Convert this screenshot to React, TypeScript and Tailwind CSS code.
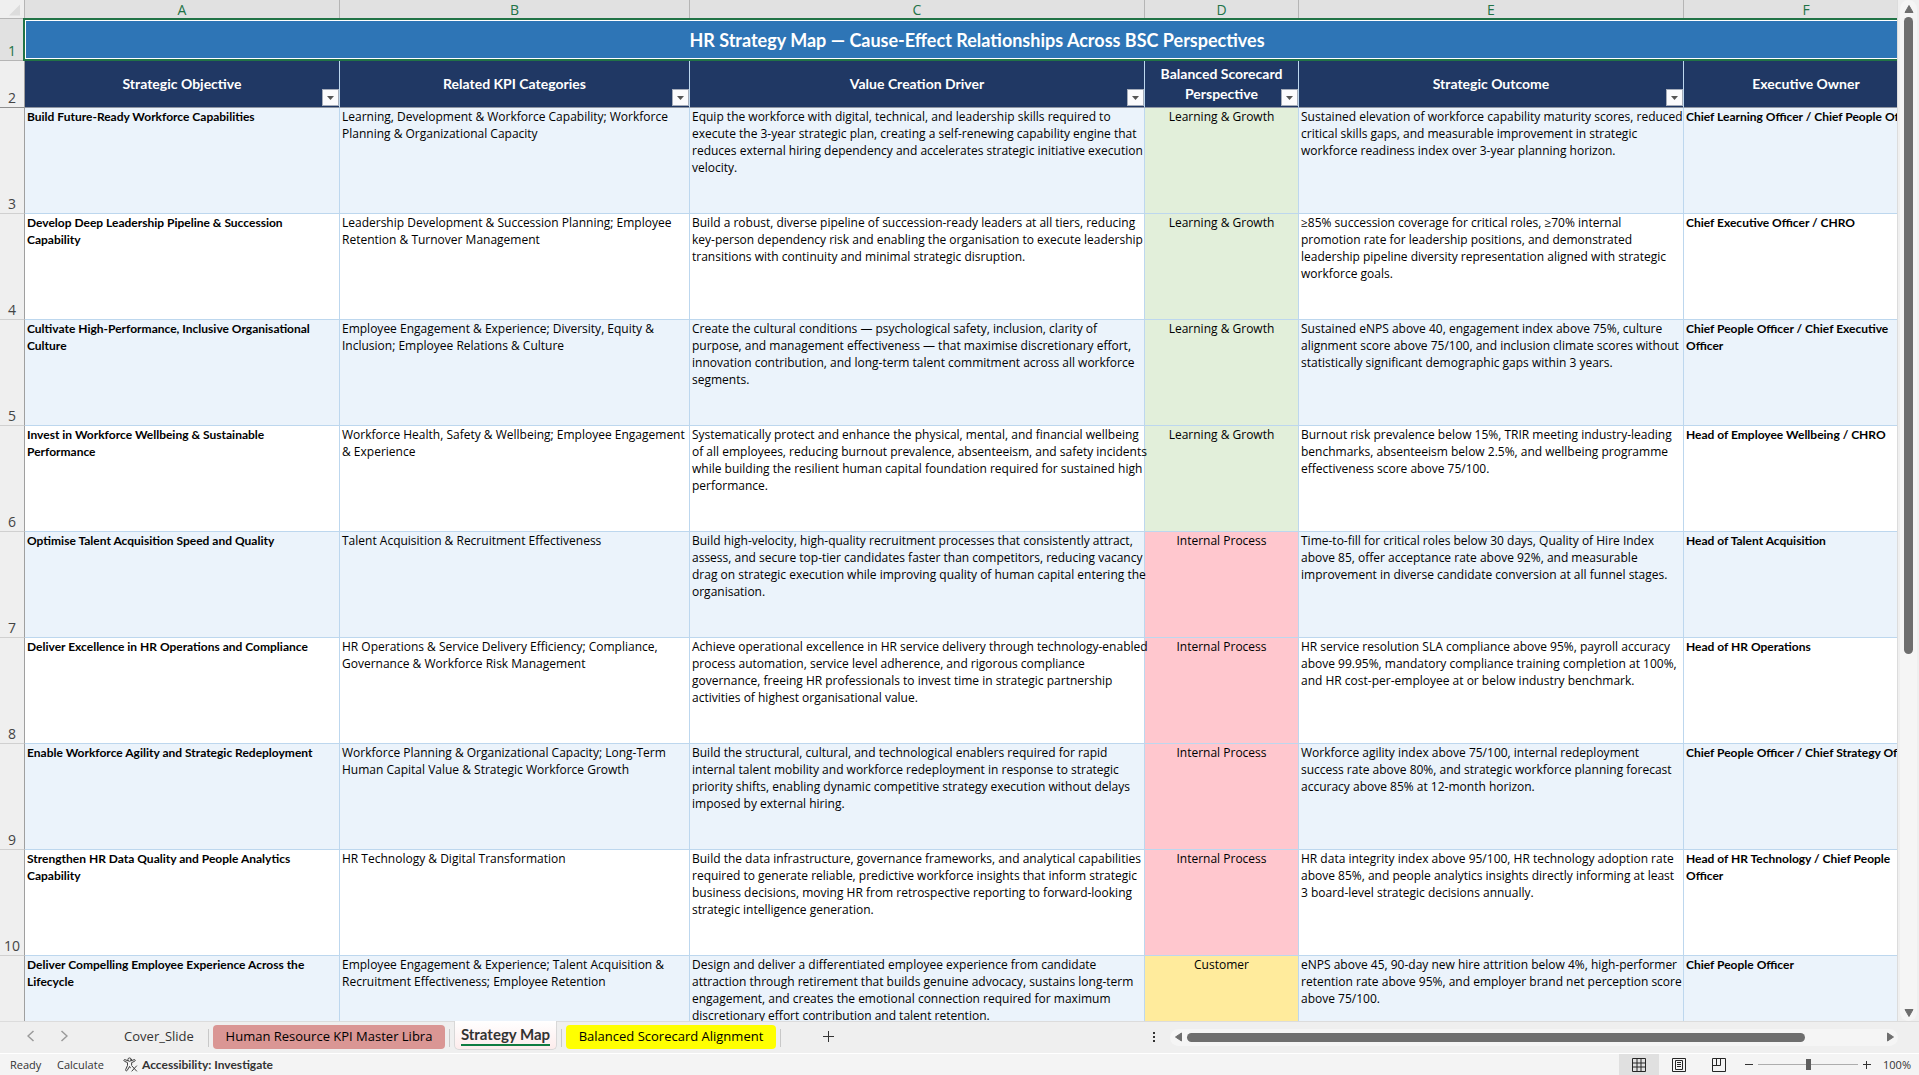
import clsx from "clsx";

type Tone = "growth" | "process" | "customer";

type Row = {
  n?: number;
  objective: string;
  kpis: string;
  driver: string;
  tone: Tone;
  outcome: string;
  owner: string;
};

const tones: Record<Tone, { label: string; className: string }> = {
  growth: { label: "Learning & Growth", className: "bg-[#e2efda]" },
  process: { label: "Internal Process", className: "bg-[#ffc7ce]" },
  customer: { label: "Customer", className: "bg-[#ffeb9c]" },
};

const columns = [
  { letter: "A", title: "Strategic Objective", width: "w-[315px]", filter: true },
  { letter: "B", title: "Related KPI Categories", width: "w-[350px]", filter: true },
  { letter: "C", title: "Value Creation Driver", width: "w-[455px]", filter: true },
  { letter: "D", title: "Balanced Scorecard\nPerspective", width: "w-[154px]", filter: true },
  { letter: "E", title: "Strategic Outcome", width: "w-[385px]", filter: true },
  { letter: "F", title: "Executive Owner", width: "w-[245px]", filter: false },
];

const rows: Row[] = [
  {
    n: 3,
    objective: "Build Future-Ready Workforce Capabilities",
    kpis: "Learning, Development & Workforce Capability; Workforce\nPlanning & Organizational Capacity",
    driver:
      "Equip the workforce with digital, technical, and leadership skills required to\nexecute the 3-year strategic plan, creating a self-renewing capability engine that\nreduces external hiring dependency and accelerates strategic initiative execution\nvelocity.",
    tone: "growth",
    outcome:
      "Sustained elevation of workforce capability maturity scores, reduced\ncritical skills gaps, and measurable improvement in strategic\nworkforce readiness index over 3-year planning horizon.",
    owner: "Chief Learning Officer / Chief People Officer",
  },
  {
    n: 4,
    objective: "Develop Deep Leadership Pipeline & Succession\nCapability",
    kpis: "Leadership Development & Succession Planning; Employee\nRetention & Turnover Management",
    driver:
      "Build a robust, diverse pipeline of succession-ready leaders at all tiers, reducing\nkey-person dependency risk and enabling the organisation to execute leadership\ntransitions with continuity and minimal strategic disruption.",
    tone: "growth",
    outcome:
      "≥85% succession coverage for critical roles, ≥70% internal\npromotion rate for leadership positions, and demonstrated\nleadership pipeline diversity representation aligned with strategic\nworkforce goals.",
    owner: "Chief Executive Officer / CHRO",
  },
  {
    n: 5,
    objective: "Cultivate High-Performance, Inclusive Organisational\nCulture",
    kpis: "Employee Engagement & Experience; Diversity, Equity &\nInclusion; Employee Relations & Culture",
    driver:
      "Create the cultural conditions — psychological safety, inclusion, clarity of\npurpose, and management effectiveness — that maximise discretionary effort,\ninnovation contribution, and long-term talent commitment across all workforce\nsegments.",
    tone: "growth",
    outcome:
      "Sustained eNPS above 40, engagement index above 75%, culture\nalignment score above 75/100, and inclusion climate scores without\nstatistically significant demographic gaps within 3 years.",
    owner: "Chief People Officer / Chief Executive\nOfficer",
  },
  {
    n: 6,
    objective: "Invest in Workforce Wellbeing & Sustainable\nPerformance",
    kpis: "Workforce Health, Safety & Wellbeing; Employee Engagement\n& Experience",
    driver:
      "Systematically protect and enhance the physical, mental, and financial wellbeing\nof all employees, reducing burnout prevalence, absenteeism, and safety incidents\nwhile building the resilient human capital foundation required for sustained high\nperformance.",
    tone: "growth",
    outcome:
      "Burnout risk prevalence below 15%, TRIR meeting industry-leading\nbenchmarks, absenteeism below 2.5%, and wellbeing programme\neffectiveness score above 75/100.",
    owner: "Head of Employee Wellbeing / CHRO",
  },
  {
    n: 7,
    objective: "Optimise Talent Acquisition Speed and Quality",
    kpis: "Talent Acquisition & Recruitment Effectiveness",
    driver:
      "Build high-velocity, high-quality recruitment processes that consistently attract,\nassess, and secure top-tier candidates faster than competitors, reducing vacancy\ndrag on strategic execution while improving quality of human capital entering the\norganisation.",
    tone: "process",
    outcome:
      "Time-to-fill for critical roles below 30 days, Quality of Hire Index\nabove 85, offer acceptance rate above 92%, and measurable\nimprovement in diverse candidate conversion at all funnel stages.",
    owner: "Head of Talent Acquisition",
  },
  {
    n: 8,
    objective: "Deliver Excellence in HR Operations and Compliance",
    kpis: "HR Operations & Service Delivery Efficiency; Compliance,\nGovernance & Workforce Risk Management",
    driver:
      "Achieve operational excellence in HR service delivery through technology-enabled\nprocess automation, service level adherence, and rigorous compliance\ngovernance, freeing HR professionals to invest time in strategic partnership\nactivities of highest organisational value.",
    tone: "process",
    outcome:
      "HR service resolution SLA compliance above 95%, payroll accuracy\nabove 99.95%, mandatory compliance training completion at 100%,\nand HR cost-per-employee at or below industry benchmark.",
    owner: "Head of HR Operations",
  },
  {
    n: 9,
    objective: "Enable Workforce Agility and Strategic Redeployment",
    kpis: "Workforce Planning & Organizational Capacity; Long-Term\nHuman Capital Value & Strategic Workforce Growth",
    driver:
      "Build the structural, cultural, and technological enablers required for rapid\ninternal talent mobility and workforce redeployment in response to strategic\npriority shifts, enabling dynamic competitive strategy execution without delays\nimposed by external hiring.",
    tone: "process",
    outcome:
      "Workforce agility index above 75/100, internal redeployment\nsuccess rate above 80%, and strategic workforce planning forecast\naccuracy above 85% at 12-month horizon.",
    owner: "Chief People Officer / Chief Strategy Officer",
  },
  {
    n: 10,
    objective: "Strengthen HR Data Quality and People Analytics\nCapability",
    kpis: "HR Technology & Digital Transformation",
    driver:
      "Build the data infrastructure, governance frameworks, and analytical capabilities\nrequired to generate reliable, predictive workforce insights that inform strategic\nbusiness decisions, moving HR from retrospective reporting to forward-looking\nstrategic intelligence generation.",
    tone: "process",
    outcome:
      "HR data integrity index above 95/100, HR technology adoption rate\nabove 85%, and people analytics insights directly informing at least\n3 board-level strategic decisions annually.",
    owner: "Head of HR Technology / Chief People\nOfficer",
  },
  {
    objective: "Deliver Compelling Employee Experience Across the\nLifecycle",
    kpis: "Employee Engagement & Experience; Talent Acquisition &\nRecruitment Effectiveness; Employee Retention",
    driver:
      "Design and deliver a differentiated employee experience from candidate\nattraction through retirement that builds genuine advocacy, sustains long-term\nengagement, and creates the emotional connection required for maximum\ndiscretionary effort contribution and talent retention.",
    tone: "customer",
    outcome:
      "eNPS above 45, 90-day new hire attrition below 4%, high-performer\nretention rate above 95%, and employer brand net perception score\nabove 75/100.",
    owner: "Chief People Officer",
  },
];

const cell =
  "border-r border-b border-[#bdd7ee] px-0.5 py-0 align-top whitespace-pre";
const boldCell = clsx(cell, "font-[Lato] font-bold");
const rowHead =
  "border-r border-b border-r-[#9f9f9f] p-0 align-bottom text-center font-['Open_Sans'] text-sm leading-[18px] font-normal";

function FilterButton({ title }: { title: string }) {
  return (
    <button
      type="button"
      aria-label={`Filter ${title.replace("\n", " ")}`}
      className="absolute right-0 bottom-px flex h-[17px] w-[17px] items-center justify-center border border-[#a6adba] bg-[#fbfbfd]"
    >
      <svg viewBox="0 0 7 4" className="h-1 w-[7px]" aria-hidden>
        <path d="M0 0h7L3.500 4z" fill="#555" />
      </svg>
    </button>
  );
}

function Sheet() {
  return (
    <table className="w-[1929px] table-fixed border-separate border-spacing-0 font-['Open_Sans'] text-xs leading-[17px] text-black">
      <colgroup>
        <col className="w-[25px]" />
        {columns.map((c) => (
          <col key={c.letter} className={c.width} />
        ))}
      </colgroup>
      <thead>
        <tr className="h-[18px] text-sm leading-4 text-[#217346]">
          <td className="border-r border-[#b5b5b5] bg-[#efefef] p-0">
            <svg viewBox="0 0 24 18" className="block h-[18px] w-6" aria-hidden>
              <path d="M20 4.500v11H9z" fill="#dcdcdc" />
            </svg>
          </td>
          {columns.map((c) => (
            <th
              key={c.letter}
              scope="col"
              className="h-[18px] border-r border-[#b5b5b5] bg-[#e1e1e1] p-0 pt-0.5 font-normal"
            >
              {c.letter}
            </th>
          ))}
        </tr>
        <tr className="h-[43px]">
          <th scope="row" className={clsx(rowHead, "border-t border-y-[#b5b5b5] bg-[#e1e1e1] text-[#217346]")}>
            1
          </th>
          <th
            colSpan={6}
            className="relative bg-[#2e75b6] p-0 text-center font-[Lato] text-lg leading-6 font-bold text-white"
          >
            HR Strategy Map — Cause-Effect Relationships Across BSC Perspectives
            <span className="pointer-events-none absolute inset-y-0 right-0 -left-0.5 border-2 border-[#217346]">
              <span className="block h-full border border-white" />
            </span>
          </th>
        </tr>
        <tr className="h-[47px]">
          <th scope="row" className={clsx(rowHead, "border-b-[#8f8f8f] bg-[#efefef] text-[#444]")}>
            2
          </th>
          {columns.map((c) => (
            <th
              key={c.letter}
              scope="col"
              className="relative border-r border-b border-r-[#bdd7ee] border-b-[#8f96a3] bg-[#203864] p-0 text-center align-middle font-[Lato] text-sm leading-5 font-bold whitespace-pre text-white"
            >
              {c.title}
              {c.filter && <FilterButton title={c.title} />}
            </th>
          ))}
        </tr>
      </thead>
      <tbody>
        {rows.map((row) => (
          <tr
            key={row.objective}
            className="h-[106px] bg-white odd:bg-[#ebf3fb]"
          >
            <th scope="row" className={clsx(rowHead, "border-b-[#d0d0d0] bg-[#efefef] text-[#444]")}>
              {row.n}
            </th>
            <td className={boldCell}>{row.objective}</td>
            <td className={cell}>{row.kpis}</td>
            <td className={cell}>{row.driver}</td>
            <td className={clsx(cell, "text-center", tones[row.tone].className)}>
              {tones[row.tone].label}
            </td>
            <td className={cell}>{row.outcome}</td>
            <td className={boldCell}>{row.owner}</td>
          </tr>
        ))}
      </tbody>
    </table>
  );
}

function Arrow({ d, label }: { d: string; label: string }) {
  return (
    <button type="button" aria-label={label} className="flex h-[17px] w-[17px] shrink-0 items-center justify-center">
      <svg viewBox="0 0 10 10" className="h-2.5 w-2.5" aria-hidden>
        <path d={d} fill="#6e6e6e" stroke="#6e6e6e" strokeLinejoin="round" />
      </svg>
    </button>
  );
}

function VerticalScroll() {
  return (
    <div className="mr-0.5 ml-0.5 flex w-[17px] shrink-0 flex-col items-center rounded-full bg-[#f5f5f5]">
      <Arrow label="Scroll up" d="M5 1.500L9 8.500H1z" />
      <div className="flex w-full flex-1 justify-center">
        <div className="h-[64.5%] w-[9px] rounded-full bg-[#6e6e6e]" />
      </div>
      <Arrow label="Scroll down" d="M5 8.500L1 1.500h8z" />
    </div>
  );
}

function HorizontalScroll() {
  return (
    <div className="flex h-[17px] w-[728px] items-center rounded-full bg-[#f5f5f5]">
      <Arrow label="Scroll left" d="M1.500 5L7.500 1v8z" />
      <div className="flex-1">
        <div className="h-[9px] w-[89%] rounded-full bg-[#6e6e6e]" />
      </div>
      <Arrow label="Scroll right" d="M8.500 5L2.500 1v8z" />
    </div>
  );
}

function Divider() {
  return <span className="mx-1 mt-1 h-[18px] w-px shrink-0 bg-[#c8c8c8]" />;
}

function TabBar() {
  return (
    <div className="flex h-8 shrink-0 border-t border-[#dcdcdc] bg-[#efefef] font-['Open_Sans'] text-[13px] whitespace-nowrap text-[#333]">
      <div className="flex h-7 w-[114px] shrink-0 items-center gap-[25px] pl-[27px] text-[#9a9a9a]">
        <button type="button" aria-label="Previous sheet">
          <svg viewBox="0 0 8 12" fill="none" className="h-3 w-2" aria-hidden>
            <path d="M6.500 1L1 6l5.500 5" stroke="currentColor" strokeWidth="1.5" />
          </svg>
        </button>
        <button type="button" aria-label="Next sheet">
          <svg viewBox="0 0 8 12" fill="none" className="h-3 w-2" aria-hidden>
            <path d="M1.500 1L7 6l-5.500 5" stroke="currentColor" strokeWidth="1.5" />
          </svg>
        </button>
      </div>
      <button type="button" className="h-[30px] w-[90px] shrink-0">Cover_Slide</button>
      <div className="flex shrink-0 items-start pt-[3px]">
        <Divider />
        <button type="button" className="h-6 w-[232px] rounded-[4px] bg-[#da9694] text-black">
          Human Resource KPI Master Libra
        </button>
        <Divider />
      </div>
      <button
        type="button"
        className="-mt-px flex h-[29px] w-[103px] shrink-0 justify-center rounded-b-[5px] border border-t-0 border-[#d8d8d8] bg-linear-to-b from-white to-[#fdecec] font-[Lato] text-[15px] leading-[26px] font-bold"
      >
        <span className="h-[25px] border-b-2 border-[#107c41]">Strategy Map</span>
      </button>
      <div className="flex shrink-0 items-start pt-[3px]">
        <Divider />
        <button type="button" className="h-6 w-[210px] rounded-[4px] bg-[#ffff00] text-black">
          Balanced Scorecard Alignment
        </button>
        <Divider />
      </div>
      <button type="button" aria-label="New sheet" className="ml-[38px] h-7 shrink-0">
        <svg viewBox="0 0 11 11" className="h-[11px] w-[11px]" aria-hidden>
          <path d="M5.500 0v11M0 5.500h11" stroke="#333" />
        </svg>
      </button>
      <div className="ml-auto flex h-7 items-center gap-[15px] pr-[21px] pt-0.5">
        <svg viewBox="0 0 2 10" className="h-2.5 w-0.5" aria-hidden>
          <path d="M0 0h2v2H0zM0 4h2v2H0zM0 8h2v2H0z" fill="#333" />
        </svg>
        <HorizontalScroll />
      </div>
    </div>
  );
}

function StatusBar() {
  return (
    <div className="flex h-[22px] shrink-0 items-center border-t border-white bg-[#f4f4f4] pl-2.5 font-['Open_Sans'] text-[11px] leading-5 whitespace-nowrap text-[#333]">
      <span className="w-[47px]">Ready</span>
      <span className="w-[66px]">Calculate</span>
      <button type="button" className="flex items-center gap-1 font-[Lato] text-xs font-bold">
        <svg viewBox="0 0 16 16" fill="none" stroke="#333" strokeLinecap="round" strokeLinejoin="round" className="h-[15px] w-[15px]" aria-hidden>
          <circle cx="7" cy="2.800" r="1.800" />
          <path d="M5.200 4L2 2.800C.8 2.600.6 4 1.500 4.500L4.800 6v3l-2 4.500c-.3 1.200 1 1.800 1.700.8L7 10l.8 1.500M8.800 4L12 2.800c1.200-.2 1.400 1.200.5 1.700L9.200 6v2.500M9.500 9.500l5 5.500M14.500 9.500l-5 5.500" />
        </svg>
        Accessibility: Investigate
      </button>
      <div className="ml-auto flex h-full items-center">
        <button type="button" aria-label="Normal view" className="flex h-full w-10 items-center justify-center bg-[#e0e0e0]">
          <svg viewBox="0 0 14 14" fill="none" stroke="#262626" className="h-3.5 w-3.5" aria-hidden>
            <path d="M.5.500h13v13H.5zM5 .5v13M9 .5v13M.5 5h13M.5 9h13" />
          </svg>
        </button>
        <button type="button" aria-label="Page layout view" className="flex h-full w-10 items-center justify-center">
          <svg viewBox="0 0 14 14" fill="none" stroke="#262626" className="h-3.5 w-3.5" aria-hidden>
            <path d="M.5.500h13v13H.5zM3.500 2.500h7v9h-7zM5 4.500h4M5 6.500h4M5 8.500h4" />
          </svg>
        </button>
        <button type="button" aria-label="Page break preview" className="flex h-full w-10 items-center justify-center">
          <svg viewBox="0 0 14 14" fill="none" stroke="#262626" className="h-3.5 w-3.5" aria-hidden>
            <path d="M.5.500h13v13H.5zM.5 7.500h8V.5M4.500.500v7" />
          </svg>
        </button>
        <button type="button" aria-label="Zoom out" className="ml-1.5">
          <svg viewBox="0 0 8 8" className="h-2 w-2" aria-hidden>
            <path d="M0 3.500h8" stroke="#333" />
          </svg>
        </button>
        <input
          type="range"
          aria-label="Zoom"
          min={0}
          max={100}
          defaultValue={51}
          className="mx-[5px] h-[11px] w-[100px] appearance-none bg-linear-to-b from-transparent from-45% via-[#666] via-45% to-transparent to-55% [&::-webkit-slider-thumb]:h-[11px] [&::-webkit-slider-thumb]:w-[5px] [&::-webkit-slider-thumb]:appearance-none [&::-webkit-slider-thumb]:bg-[#5e5e5e]"
        />
        <button type="button" aria-label="Zoom in">
          <svg viewBox="0 0 8 8" className="h-2 w-2" aria-hidden>
            <path d="M0 3.500h8M3.500 0v8" stroke="#333" />
          </svg>
        </button>
        <span className="w-12 pl-1 text-center">100%</span>
      </div>
    </div>
  );
}

export default function App() {
  return (
    <div className="flex h-screen flex-col overflow-hidden bg-[#efefef]">
      <div className="flex min-h-0 flex-1">
        <div className="min-w-0 flex-1 overflow-hidden border-r border-[#dcdcdc]">
          <Sheet />
        </div>
        <VerticalScroll />
      </div>
      <TabBar />
      <StatusBar />
    </div>
  );
}
